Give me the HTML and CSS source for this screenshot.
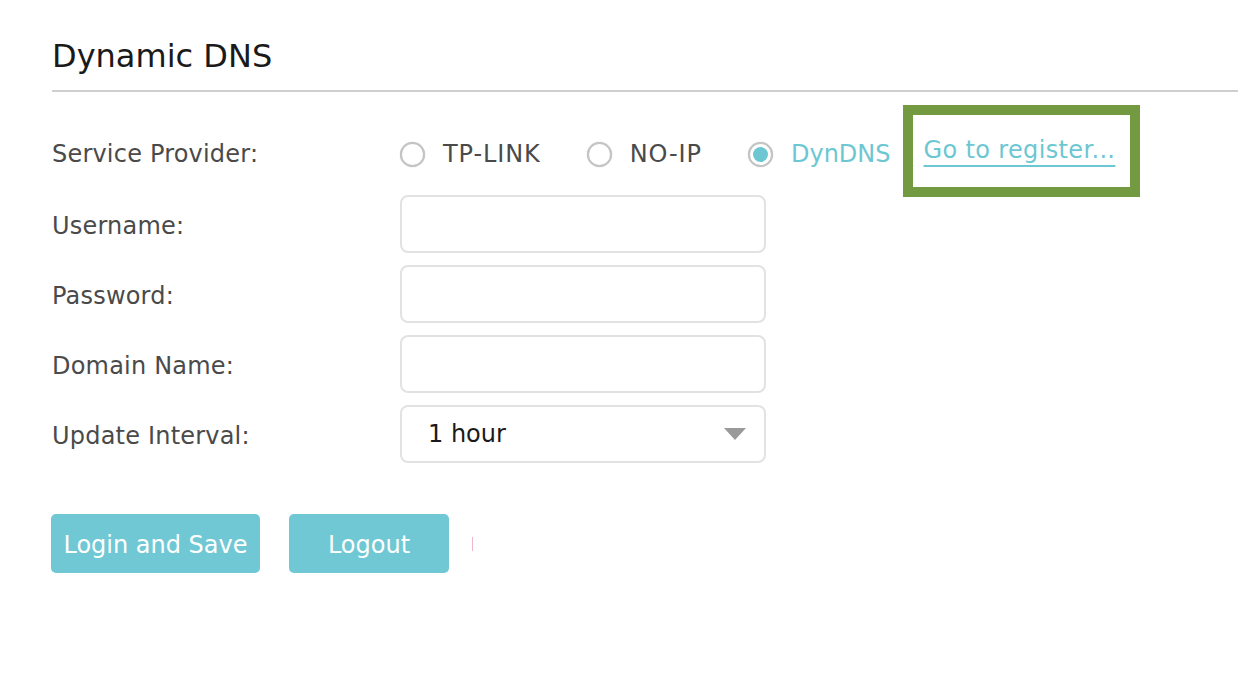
FILE: index.html
```html
<!DOCTYPE html>
<html>
<head>
<meta charset="utf-8">
<link rel="stylesheet" href="styles.css">
</head>
<body>
<div class="page">
  <h1 class="title">Dynamic DNS</h1>
  <div class="form">
    <div class="row">
      <div class="label label-top">Service Provider:</div>
      <div class="radios">
        <label class="radio wide"><span class="dot"></span><span class="rtext">TP-LINK</span></label>
        <label class="radio wide"><span class="dot"></span><span class="rtext">NO-IP</span></label>
        <label class="radio checked"><span class="dot"></span><span class="rtext">DynDNS</span></label>
        <span class="highlight"><a class="link" href="#">Go to register...</a></span>
      </div>
    </div>
    <div class="row">
      <div class="label">Username:</div>
      <div class="input"></div>
    </div>
    <div class="row">
      <div class="label">Password:</div>
      <div class="input"></div>
    </div>
    <div class="row">
      <div class="label">Domain Name:</div>
      <div class="input"></div>
    </div>
    <div class="row">
      <div class="label">Update Interval:</div>
      <div class="input select"><span class="value">1 hour</span><span class="arrow"></span></div>
    </div>
  </div>
  <div class="buttons">
    <button class="btn btn-save">Login and Save</button>
    <button class="btn btn-logout">Logout</button>
    <span class="mark"></span>
  </div>
</div>
</body>
</html>
```
FILE: styles.css
```css
html, body {
  margin: 0;
  padding: 0;
  background: #ffffff;
}
body {
  font-family: "DejaVu Sans", Verdana, sans-serif;
  color: #4a4a4a;
}
.page {
  padding: 36px 0 0 52px;
}
.title {
  margin: 0;
  font-size: 32px;
  line-height: 40px;
  font-weight: normal;
  color: #1a1a1a;
  padding-bottom: 14px;
  border-bottom: 2px solid #cfcfcf;
}
.form {
  display: flex;
  flex-direction: column;
  gap: 12px;
  padding-top: 33px;
}
.row {
  display: flex;
  align-items: center;
  height: 58px;
}
.label {
  width: 348px;
  flex: none;
  font-size: 24px;
  letter-spacing: 0.2px;
  color: #4a4a4a;
  padding-top: 3px;
}
.label.label-top {
  padding-top: 0;
}
.radios {
  display: flex;
  align-items: center;
  height: 58px;
}
.radio {
  display: flex;
  align-items: center;
  margin-right: 46px;
  font-size: 24px;
  color: #4a4a4a;
}
.radio.wide .rtext {
  letter-spacing: 0.9px;
}
.radio.checked {
  margin-right: 12px;
  color: #6cc7d3;
}
.dot {
  width: 21px;
  height: 21px;
  border-radius: 50%;
  border: 2px solid #c4c4c4;
  box-shadow: 0 0 1px #bbbbbb;
  margin-right: 18px;
  position: relative;
  background: #fff;
  flex: none;
}
.radio.checked .dot::after {
  content: "";
  position: absolute;
  left: 3px;
  top: 3px;
  width: 15px;
  height: 15px;
  border-radius: 50%;
  background: #6cc7d3;
}
.highlight {
  border: 10px solid #739a41;
  padding: 0 15px 0 11px;
  height: 72px;
  display: flex;
  align-items: center;
  margin-top: -34px;
  margin-bottom: -27px;
}
.link {
  font-size: 24px;
  letter-spacing: 0.35px;
  color: #6cc7d3;
  text-decoration: underline;
  text-decoration-thickness: 2px;
  text-underline-offset: 7px;
  padding-top: 2px;
  padding-bottom: 4px;
}
.input {
  width: 362px;
  height: 54px;
  border: 2px solid #e2e2e2;
  border-radius: 8px;
  box-sizing: content-box;
}
.select {
  display: flex;
  align-items: center;
  justify-content: space-between;
  padding: 0 18px 0 0;
  width: 344px;
}
.value {
  font-size: 24px;
  color: #1a1a1a;
  padding-left: 26px;
}
.arrow {
  width: 0;
  height: 0;
  border-left: 11px solid transparent;
  border-right: 11px solid transparent;
  border-top: 12px solid #9a9a9a;
}
.buttons {
  display: flex;
  align-items: center;
  gap: 29px;
  padding-top: 51px;
  margin-left: -1px;
}
.btn {
  height: 59px;
  border: none;
  border-radius: 5px;
  background: #6fc8d4;
  color: #ffffff;
  font-family: "DejaVu Sans", Verdana, sans-serif;
  font-size: 24px;
  padding: 3px 12px 0;
  min-width: 209px;
}
.btn-logout {
  min-width: 0;
  width: 160px;
}
.mark {
  width: 1px;
  height: 14px;
  background: #f2b6c9;
  margin-left: -6px;
}
```
